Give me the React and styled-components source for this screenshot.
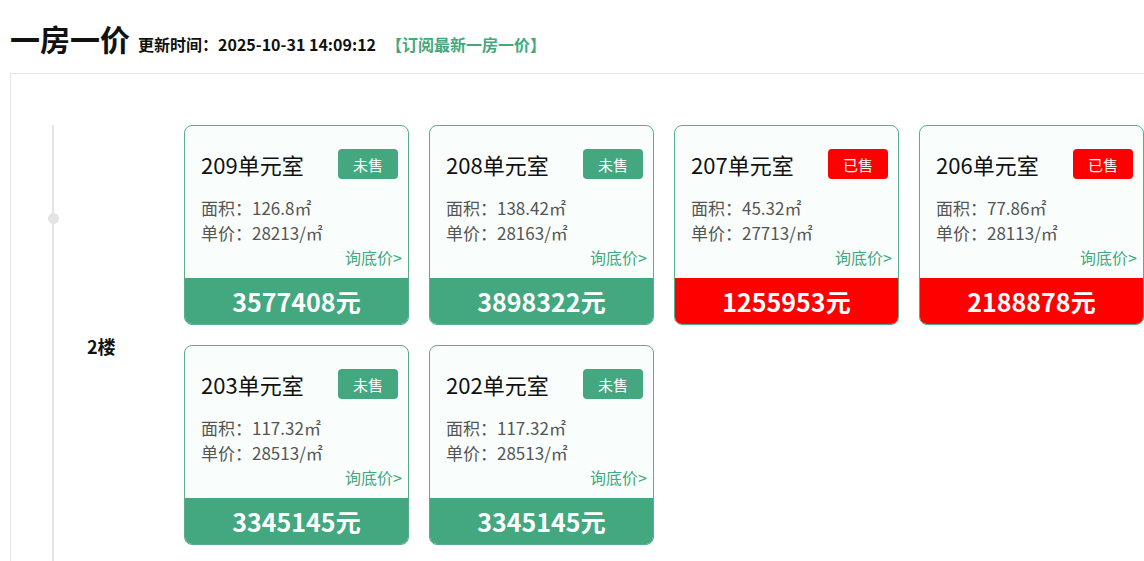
import styled, { createGlobalStyle } from "styled-components";

const GREEN = "#43a880";
const RED = "#ff0000";

const GlobalStyle = createGlobalStyle`
  html, body {
    margin: 0;
    padding: 0;
    background: #fff;
    overflow: hidden;
  }
  body {
    font-family: "Noto Sans CJK SC", "Noto Sans", sans-serif;
    color: #111;
  }
`;

const Page = styled.div`
  padding: 0 0 0 10px;
  width: 1220px;
`;

const Header = styled.div`
  display: flex;
  align-items: baseline;
  padding-top: 18px;
  height: 40px;
  margin-bottom: 15px;
`;

const Title = styled.h1`
  margin: 0;
  font-size: 30px;
  line-height: 40px;
  font-weight: 700;
  color: #111;
`;

const UpdateTime = styled.span`
  margin-left: 8px;
  font-size: 16px;
  font-weight: 700;
  color: #111;
`;

const SubscribeLink = styled.a`
  margin-left: 10px;
  font-size: 16px;
  font-weight: 700;
  color: ${GREEN};
  text-decoration: none;
  cursor: pointer;
`;

const Board = styled.div`
  border: 1px solid #e6e6e6;
  border-right: none;
  padding: 51px 0 40px 36px;
  min-height: 500px;
`;

const FloorRow = styled.div`
  display: grid;
  grid-template-columns: 12px 125px 1fr;
`;

const Timeline = styled.div`
  display: flex;
  flex-direction: column;
  align-items: center;
  margin-bottom: -60px;
`;

const TailLine = styled.div`
  width: 2px;
  background: #e4e4e4;
  height: ${(p) => (p.$grow ? "auto" : `${p.$height}px`)};
  flex: ${(p) => (p.$grow ? 1 : "none")};
`;

const Dot = styled.div`
  width: 11px;
  height: 11px;
  border-radius: 50%;
  background: #e4e4e4;
  flex: none;
`;

const FloorLabel = styled.div`
  display: flex;
  align-items: center;
  padding-left: 28px;
  padding-top: 22px;
  font-size: 18px;
  font-weight: 700;
  color: #111;
`;

const CardGrid = styled.div`
  display: grid;
  grid-template-columns: repeat(4, 225px);
  column-gap: 20px;
  row-gap: 20px;
  align-content: start;
`;

const Card = styled.div`
  box-sizing: border-box;
  height: 200px;
  border: 1px solid #5aae8d;
  border-radius: 8px;
  background: #f9fefc;
  overflow: hidden;
  display: flex;
  flex-direction: column;
`;

const CardBody = styled.div`
  flex: 1;
  padding: 23px 10px 0 16px;
`;

const CardHead = styled.div`
  display: flex;
  align-items: center;
  justify-content: space-between;
  height: 30px;
`;

const RoomName = styled.div`
  font-size: 22px;
  line-height: 30px;
  color: #111;
`;

const Badge = styled.span`
  width: 60px;
  height: 30px;
  border-radius: 4px;
  background: ${(p) => (p.$sold ? RED : GREEN)};
  color: #fff;
  font-size: 15px;
  display: flex;
  align-items: center;
  justify-content: center;
`;

const InfoList = styled.div`
  margin-top: 16px;
  font-size: 17px;
  line-height: 25px;
  color: #555;
`;

const AskLink = styled.div`
  text-align: right;
  margin-right: -4px;
  font-size: 16px;
  line-height: 25px;
  color: ${GREEN};
  cursor: pointer;
`;

const PriceBar = styled.div`
  height: 46px;
  background: ${(p) => (p.$sold ? RED : GREEN)};
  color: #fff;
  font-size: 25px;
  font-weight: 700;
  display: flex;
  align-items: center;
  justify-content: center;
`;

const rooms = [
  { name: "209", area: "126.8", unit: "28213", total: "3577408", sold: false },
  { name: "208", area: "138.42", unit: "28163", total: "3898322", sold: false },
  { name: "207", area: "45.32", unit: "27713", total: "1255953", sold: true },
  { name: "206", area: "77.86", unit: "28113", total: "2188878", sold: true },
  { name: "203", area: "117.32", unit: "28513", total: "3345145", sold: false },
  { name: "202", area: "117.32", unit: "28513", total: "3345145", sold: false },
];

function RoomCard({ room }) {
  return (
    <Card>
      <CardBody>
        <CardHead>
          <RoomName>{room.name}单元室</RoomName>
          <Badge $sold={room.sold}>{room.sold ? "已售" : "未售"}</Badge>
        </CardHead>
        <InfoList>
          <div>面积：{room.area}㎡</div>
          <div>单价：{room.unit}/㎡</div>
        </InfoList>
        <AskLink>询底价&gt;</AskLink>
      </CardBody>
      <PriceBar $sold={room.sold}>{room.total}元</PriceBar>
    </Card>
  );
}

export default function App() {
  return (
    <>
      <GlobalStyle />
      <Page>
        <Header>
          <Title>一房一价</Title>
          <UpdateTime>更新时间：2025-10-31 14:09:12</UpdateTime>
          <SubscribeLink>【订阅最新一房一价】</SubscribeLink>
        </Header>
        <Board>
          <FloorRow>
            <Timeline>
              <TailLine $height={88} />
              <Dot />
              <TailLine $grow />
            </Timeline>
            <FloorLabel>2楼</FloorLabel>
            <CardGrid>
              {rooms.map((room) => (
                <RoomCard key={room.name} room={room} />
              ))}
            </CardGrid>
          </FloorRow>
        </Board>
      </Page>
    </>
  );
}
